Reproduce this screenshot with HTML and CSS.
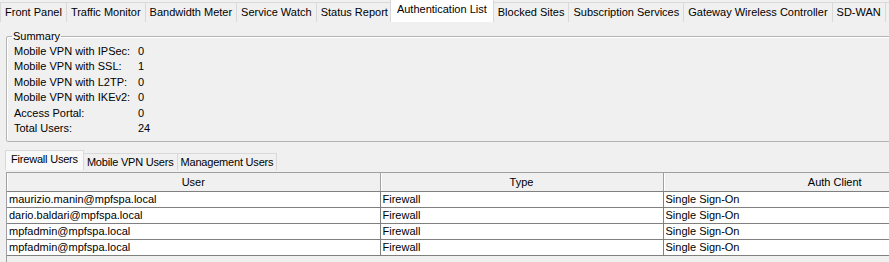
FILE: index.html
```html
<!DOCTYPE html>
<html lang="en">
<head>
  <meta charset="UTF-8" />
  <title>Authentication List</title>
  <link rel="stylesheet" href="styles.css">
</head>
<body>
  <div class="tabbar">
    <div class="tab">Front Panel</div>
    <div class="tab">Traffic Monitor</div>
    <div class="tab">Bandwidth Meter</div>
    <div class="tab">Service Watch</div>
    <div class="tab">Status Report</div>
    <div class="tab active">Authentication List</div>
    <div class="tab">Blocked Sites</div>
    <div class="tab">Subscription Services</div>
    <div class="tab">Gateway Wireless Controller</div>
    <div class="tab">SD-WAN</div>
    <div class="tab">Traffic Management</div>
  </div>

  <div class="page">
    <fieldset class="summary">
      <legend>Summary</legend>
      <div class="summary-grid">
        <span>Mobile VPN with IPSec:</span><span>0</span>
        <span>Mobile VPN with SSL:</span><span>1</span>
        <span>Mobile VPN with L2TP:</span><span>0</span>
        <span>Mobile VPN with IKEv2:</span><span>0</span>
        <span>Access Portal:</span><span>0</span>
        <span>Total Users:</span><span>24</span>
      </div>
    </fieldset>

    <div class="subtabs">
      <div class="subtab active">Firewall Users</div>
      <div class="subtab">Mobile VPN Users</div>
      <div class="subtab">Management Users</div>
    </div>

    <div class="grid-box">
      <table class="grid">
        <thead>
          <tr>
            <th class="col-user">User</th>
            <th class="col-type">Type</th>
            <th>Auth Client</th>
          </tr>
        </thead>
        <tbody>
          <tr><td>maurizio.manin@mpfspa.local</td><td>Firewall</td><td>Single Sign-On</td></tr>
          <tr><td>dario.baldari@mpfspa.local</td><td>Firewall</td><td>Single Sign-On</td></tr>
          <tr><td>mpfadmin@mpfspa.local</td><td>Firewall</td><td>Single Sign-On</td></tr>
          <tr><td>mpfadmin@mpfspa.local</td><td>Firewall</td><td>Single Sign-On</td></tr>
        </tbody>
      </table>
    </div>
  </div>
</body>
</html>
```

FILE: styles.css
```css
/* Base */
* {
  box-sizing: border-box;
}

body {
  margin: 0;
  width: 889px;
  height: 262px;
  overflow: hidden;
  background: #f0f0f0;
  color: #000;
  font-family: 'Liberation Sans', Arial, sans-serif;
  font-size: 11px;
}

/* Top tabs */
.tabbar {
  display: flex;
  align-items: flex-end;
  height: 22px;
  border-bottom: 1px solid #d9d9d9;
  white-space: nowrap;
}

.tab {
  flex: none;
  height: 20px;
  line-height: 19px;
  padding: 0 4px;
  margin-right: -1px;
  margin-bottom: -1px;
  background: #f0f0f0;
  border: 1px solid #d9d9d9;
  border-bottom: none;
}

.tab.active {
  position: relative;
  height: 23px;
  line-height: 18px;
  padding: 0 6px;
  margin: 0 -1px -1px -2px;
  background: #fff;
  z-index: 1;
}

/* Summary */
.page {
  padding: 0 0 0 6px;
}

.summary {
  margin: 8px -20px 0 0;
  padding: 1px 7px 5px 7px;
  border: 1px solid #b4b4b4;
  box-shadow: inset 1px 1px 0 #fff;
  border-radius: 2px;
}

.summary legend {
  padding: 0 1px;
  margin-left: -2px;
  line-height: 13px;
}

.summary-grid {
  display: grid;
  grid-template-columns: 124px auto;
  line-height: 15.4px;
}

/* Sub tabs */
.subtabs {
  display: flex;
  align-items: flex-end;
  height: 20px;
  margin: 8px 0 0 -1px;
  letter-spacing: -0.2px;
}

.subtab {
  height: 17px;
  line-height: 16px;
  padding: 0 3px;
  margin-right: -1px;
  border: 1px solid #d9d9d9;
  border-bottom: none;
  background: #f0f0f0;
}

.subtab.active {
  height: 20px;
  line-height: 17px;
  padding: 0 5px;
  background: #f9f9f9;
}

/* Grid */
.grid-box {
  margin-top: 2px;
  height: 100px;
  border: 1px solid #a0a0a0;
  border-right: none;
  background: #f0f0f0;
}

.grid {
  width: 1000px;
  border-collapse: collapse;
  table-layout: fixed;
}

.grid th {
  height: 18px;
  padding: 0;
  font-weight: normal;
  text-align: center;
  background: #f0f0f0;
  border-right: 1px solid #a0a0a0;
  border-bottom: 1px solid #808080;
  box-shadow: inset 1px 0 0 #fff;
}

.grid .col-user {
  width: 373px;
}

.grid .col-type {
  width: 283px;
}

.grid td {
  height: 16px;
  padding: 0 2px;
  line-height: 14px;
  background: #fff;
  border-right: 1px solid #808080;
  border-bottom: 1px solid #808080;
  white-space: nowrap;
}
```
